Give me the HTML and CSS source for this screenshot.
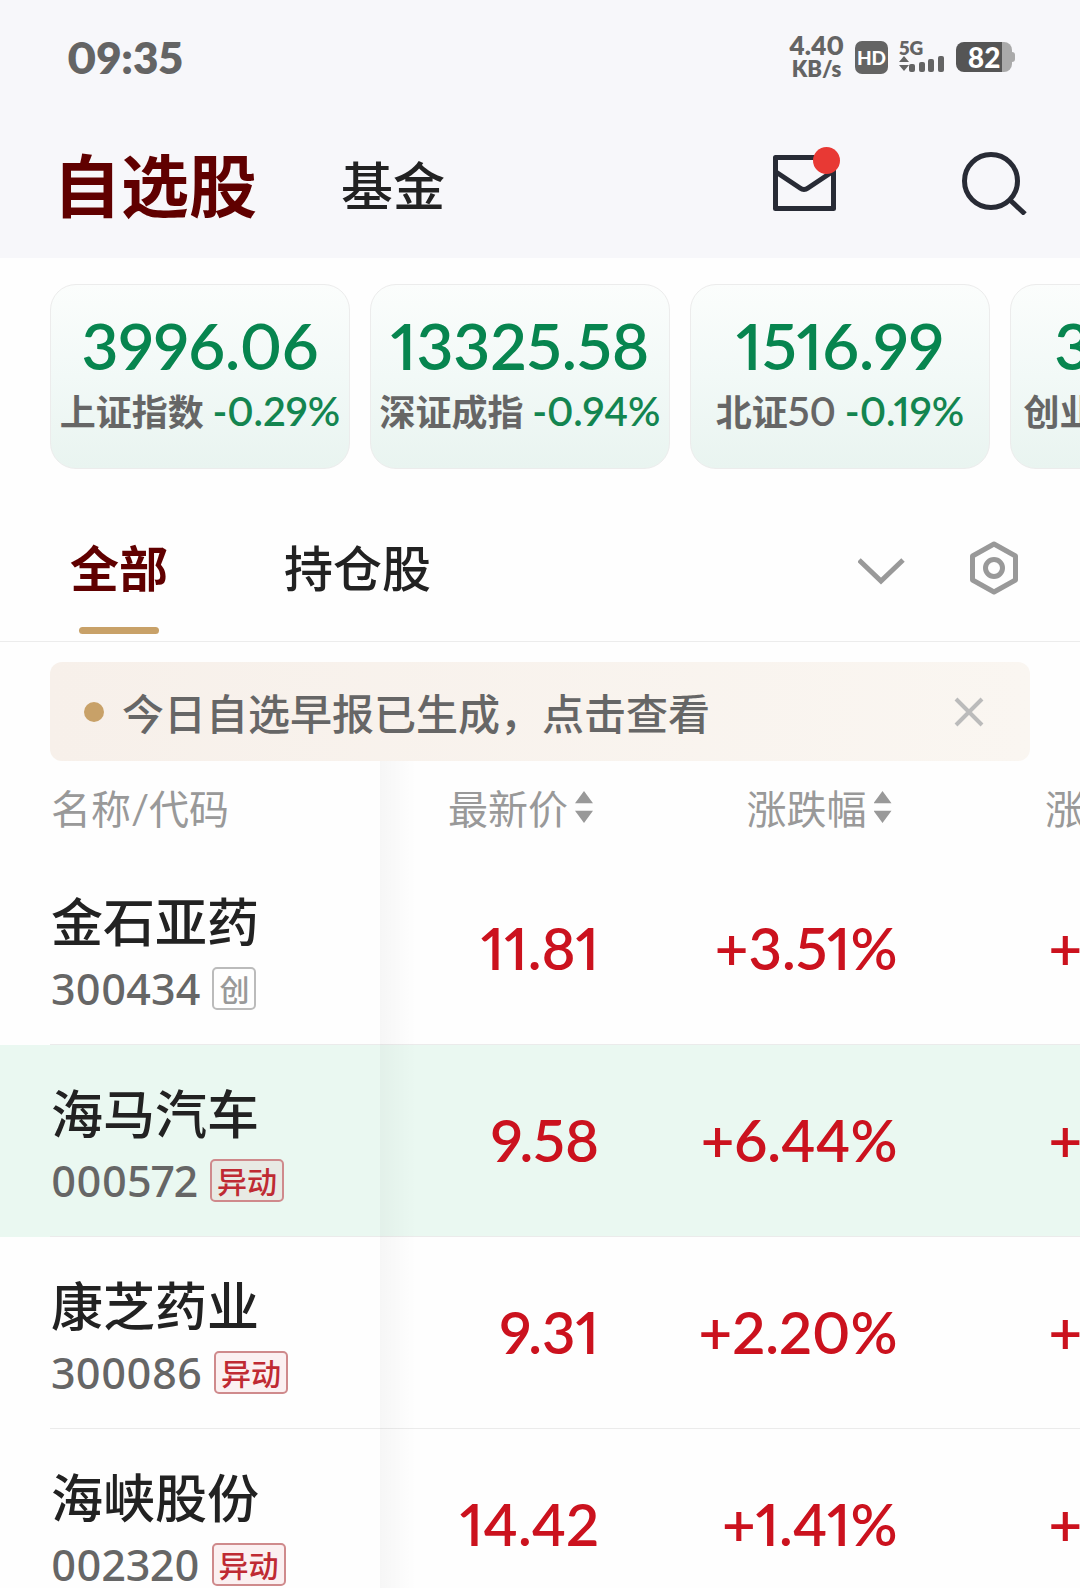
FILE: index.html
```
<!DOCTYPE html>
<html lang="zh-Hans">
<head>
<meta charset="UTF-8">
<meta name="viewport" content="width=device-width, initial-scale=1.0">
<title>自选股</title>
<link rel="stylesheet" href="styles.css">
</head>
<body>
<div class="app">
  <header class="top">
    <div class="status">
      <span class="time">09:35</span>
      <div class="status-right">
        <div class="speed"><span>4.40</span><span class="unit">KB/s</span></div>
        <span class="hd">HD</span>
        <svg class="signal" width="46" height="34" viewBox="0 0 46 34">
          <text class="net" x="0" y="15">5G</text>
          <path d="M0 22l5-6 5 6zM0 25h10l-5 6z"/>
          <rect x="10" y="24" width="6" height="8" rx="2"/>
          <rect x="20" y="22" width="6" height="10" rx="2"/>
          <rect x="29" y="19" width="6" height="13" rx="2"/>
          <rect x="39" y="16" width="6" height="16" rx="2"/>
        </svg>
        <div class="battery"><span>82</span></div>
      </div>
    </div>
    <nav class="main-nav">
      <a class="nav-item active" href="#">自选股</a>
      <a class="nav-item" href="#">基金</a>
      <div class="nav-icons">
        <button class="icon-btn" aria-label="消息">
          <svg width="68" height="68" viewBox="0 0 68 68" fill="none" stroke="#282b35" stroke-width="5" stroke-linejoin="round">
            <rect x="3.500" y="10.500" width="58" height="51"/>
            <path d="M4 25l24 16q4 3 8 0l24-16"/>
            <circle cx="54.500" cy="13.500" r="13.500" fill="#e83934" stroke="none"/>
          </svg>
        </button>
        <button class="icon-btn" aria-label="搜索">
          <svg width="68" height="68" viewBox="0 0 68 68" fill="none" stroke="#282b35" stroke-width="5">
            <circle cx="31" cy="34" r="26.500"/>
            <path d="M50 53l15 14"/>
          </svg>
        </button>
      </div>
    </nav>
  </header>

  <section class="indices">
    <div class="index-card">
      <div class="index-value">3996.06</div>
      <div class="index-name">上证指数 <span class="index-rate">-0.29%</span></div>
    </div>
    <div class="index-card">
      <div class="index-value">13325.58</div>
      <div class="index-name">深证成指 <span class="index-rate">-0.94%</span></div>
    </div>
    <div class="index-card">
      <div class="index-value">1516.99</div>
      <div class="index-name">北证<span class="index-num">50</span> <span class="index-rate">-0.19%</span></div>
    </div>
    <div class="index-card">
      <div class="index-value">3216.18</div>
      <div class="index-name">创业板指 <span class="index-rate">-0.71%</span></div>
    </div>
  </section>

  <nav class="tabs">
    <a class="tab active" href="#">全部</a>
    <a class="tab" href="#">持仓股</a>
    <div class="tab-icons">
      <button class="icon-btn" aria-label="展开">
        <svg width="48" height="54" viewBox="0 0 48 54" fill="none" stroke="#999" stroke-width="5">
          <path d="M1 19l22 21 22-21"/>
        </svg>
      </button>
      <button class="icon-btn" aria-label="设置">
        <svg width="48" height="54" viewBox="0 0 48 54" fill="none" stroke="#999" stroke-width="5" stroke-linejoin="round">
          <path d="M24 3l21.500 12v24L24 51 2.500 39V15z"/>
          <circle cx="24" cy="27" r="8.500"/>
        </svg>
      </button>
    </div>
  </nav>

  <div class="notice">
    <span class="dot"></span>
    <span class="notice-text">今日自选早报已生成，点击查看</span>
    <button class="icon-btn" aria-label="关闭">
      <svg width="30" height="30" viewBox="0 0 30 30" fill="none" stroke="#bbb" stroke-width="4">
        <path d="M2 2l26 26M28 2L2 28"/>
      </svg>
    </button>
  </div>

  <div class="list">
    <table class="stocks">
      <colgroup><col class="col-name"><col class="col-price"><col class="col-rate"><col class="col-rate"></colgroup>
      <thead>
        <tr>
          <th>名称/代码</th>
          <th>最新价<span class="sort"></span></th>
          <th>涨跌幅<span class="sort"></span></th>
          <th>涨跌额<span class="sort"></span></th>
        </tr>
      </thead>
      <tbody>
        <tr>
          <td><div class="name">金石亚药</div><div class="code">300434<span class="tag">创</span></div></td>
          <td>11.81</td><td>+3.51%</td><td>+0.40</td>
        </tr>
        <tr class="flash">
          <td><div class="name">海马汽车</div><div class="code">000572<span class="tag hot">异动</span></div></td>
          <td>9.58</td><td>+6.44%</td><td>+0.58</td>
        </tr>
        <tr>
          <td><div class="name">康芝药业</div><div class="code">300086<span class="tag hot">异动</span></div></td>
          <td>9.31</td><td>+2.20%</td><td>+0.20</td>
        </tr>
        <tr>
          <td><div class="name">海峡股份</div><div class="code">002320<span class="tag hot">异动</span></div></td>
          <td>14.42</td><td>+1.41%</td><td>+0.20</td>
        </tr>
      </tbody>
    </table>
  </div>
</div>
</body>
</html>
```
FILE: styles.css
```
* { box-sizing: border-box; }
body { margin: 0; background: #fefefe; color: #222; font-family: Lato, "Noto Sans CJK SC", sans-serif; font-variant-numeric: proportional-nums; }
a { color: inherit; text-decoration: none; }
svg { display: block; }
.app { height: 100vh; overflow: hidden; }
.icon-btn { padding: 0; border: 0; background: none; }

/* 状态栏 */
.top { height: 258px; background: #f7f7fa; }
.status { display: flex; justify-content: space-between; align-items: center; height: 116px; padding: 0 68px 2px 67px; color: #646464; }
.time { font-size: 44px; line-height: 48px; font-weight: 800; }
.status-right { display: flex; align-items: center; gap: 11px; }
.speed { display: flex; flex-direction: column; align-items: center; font-size: 26px; line-height: 23px; font-weight: 800; }
.unit { font-size: 22px; }
.hd { width: 33px; height: 33px; border-radius: 7px; background: #646464; color: #fff; font-size: 19px; line-height: 33px; font-weight: 900; text-align: center; }
.signal { overflow: visible; fill: #646464; }
.net { font-size: 19px; font-weight: 800; }
.battery { position: relative; width: 56px; height: 30px; border-radius: 8px; background: linear-gradient(90deg, #555 46px, #aaa 46px); color: #fff; font-size: 28px; line-height: 30px; font-weight: 900; text-align: center; }
.battery::after { content: ""; position: absolute; right: -3px; top: 10px; width: 4px; height: 10px; border-radius: 0 3px 3px 0; background: #aaa; }

.main-nav { display: flex; align-items: center; height: 140px; padding: 0 52px 0 53px; }
.nav-item { margin-right: 84px; font-size: 52px; line-height: 80px; font-weight: 500; }
.nav-item.active { color: #600000; font-size: 68px; font-weight: 700; }
.nav-icons { display: flex; gap: 120px; margin-left: auto; padding-bottom: 10px; }

/* 指数卡片 */
.indices { display: flex; gap: 20px; padding: 26px 50px 0; overflow: hidden; }
.index-card { flex: none; width: 300px; height: 185px; padding-top: 29px; border: 1px solid #ececec; border-radius: 26px; background: linear-gradient(#fbfdfc, #f2f9f7 50%, #e9f4f0); text-align: center; white-space: nowrap; }
.index-value { color: #07854f; font-size: 64px; line-height: 64px; font-weight: 600; }
.index-name { color: #666; font-size: 36px; line-height: 66px; font-weight: 700; }
.index-rate, .index-num { font-size: 40px; font-weight: 600; }
.index-rate { color: #138550; }

/* 分组 */
.tabs { display: flex; height: 173px; padding: 61px 62px 0 70px; border-bottom: 1px solid #ececec; }
.tab { position: relative; height: 110px; margin-right: 116px; font-size: 49px; line-height: 76px; font-weight: 500; }
.tab.active { color: #600000; font-weight: 700; }
.tab.active::after { content: ""; position: absolute; left: 9px; bottom: 6px; width: 80px; height: 7px; border-radius: 4px; background: #c8a168; }
.tab-icons { display: flex; align-items: center; gap: 64px; height: 76px; margin-left: auto; }

.notice { display: flex; align-items: center; height: 99px; margin: 20px 50px 0; padding: 0 46px 0 34px; border-radius: 12px; background: linear-gradient(90deg, #f7f0ea, #faf6f1); }
.dot { width: 20px; height: 20px; margin-right: 18px; border-radius: 50%; background: #c8a168; }
.notice-text { flex: 1; color: #666; font-size: 42px; font-weight: 500; }

/* 股票列表 */
.list { position: relative; overflow: hidden; }
.list::after { content: ""; position: absolute; left: 380px; top: 0; bottom: 0; width: 36px; background: linear-gradient(90deg, rgba(0, 0, 0, .03), rgba(0, 0, 0, 0)); }
.stocks { width: 1196px; table-layout: fixed; border-collapse: collapse; }
.col-name { width: 380px; }
.col-price { width: 219px; }
.stocks th { height: 92px; padding: 4px 6px 0 0; color: #999; font-size: 40px; line-height: 56px; font-weight: 400; text-align: right; white-space: nowrap; }
.sort { display: inline-block; width: 18px; height: 32px; margin-left: 7px; vertical-align: 1px; background: #999; clip-path: polygon(0 38%, 50% 0, 100% 38%, 100% 62%, 50% 100%, 0 62%, 100% 62%, 100% 38%); }
.stocks td { height: 192px; padding: 0 0 4px; color: #cb121e; font-size: 58px; font-weight: 600; text-align: right; }
.stocks td:last-child { padding-left: 151px; text-align: left; }
.stocks th:first-child { padding: 4px 0 0 51px; text-align: left; }
.stocks td:first-child { padding: 7px 0 0 51px; text-align: left; }
.stocks tbody tr { background: linear-gradient(#ebebeb, #ebebeb) 50px 100% / 100% 1px no-repeat; }
.stocks tbody .flash { background-color: #eaf8f1; }
.name { color: #222; font-size: 52px; line-height: 72px; font-weight: 500; }
.code { display: flex; align-items: center; gap: 12px; color: #666; font-family: "Noto Sans", "Noto Sans CJK SC", sans-serif; font-size: 43px; line-height: 62px; font-weight: 500; }
.tag { height: 43px; padding: 0 5px; border: 2px solid #bbb; border-radius: 5px; color: #999; font-family: "Noto Sans CJK SC", sans-serif; font-size: 30px; line-height: 38px; font-weight: 500; }
.tag.hot { border-color: #cf8a8c; background: rgba(203, 18, 30, .06); color: #bf2a33; }
```
